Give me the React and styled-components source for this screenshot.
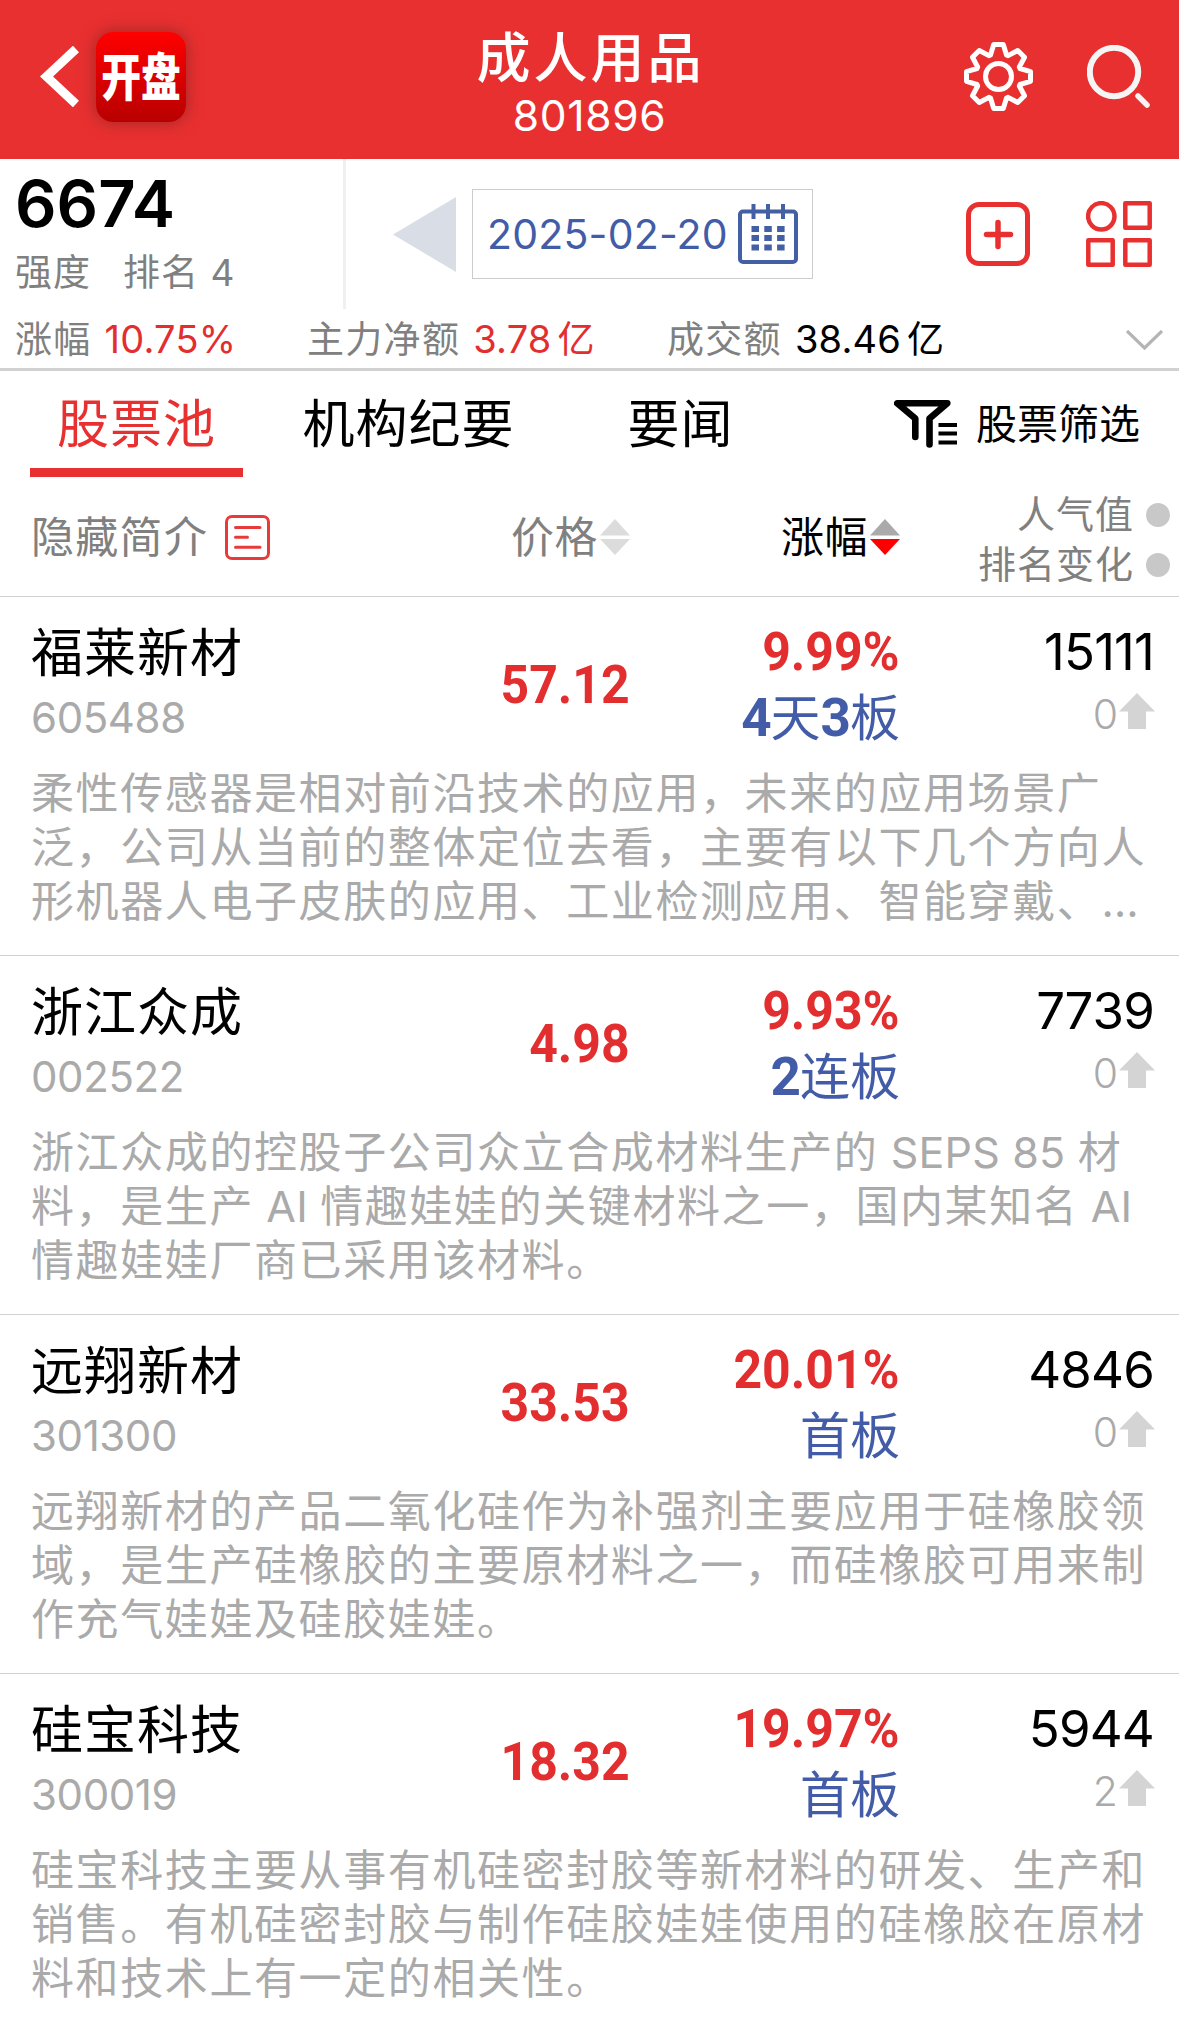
import React from "react";
import styled, { createGlobalStyle } from "styled-components";

const GlobalStyle = createGlobalStyle`
    * {
        box-sizing: border-box;
    }
    body {
        margin: 0;
        background-color: #fff;
        font-family: Inter, "Noto Sans CJK SC", sans-serif;
        overflow: hidden;
    }
    svg {
        display: block;
        flex-shrink: 0;
    }
`;

const Page = styled.div`
    width: 1179px;
    height: 2026px;
    overflow: hidden;
    background-color: #fff;
    color: #000;
    white-space: nowrap;
`;

const Header = styled.header`
    display: grid;
    grid-template-columns: 1fr auto 1fr;
    align-items: center;
    height: 159px;
    padding: 0 29px 6px 40px;
    background-color: #e93030;
    color: #fff;
`;

const HeaderLeft = styled.div`
    display: flex;
    align-items: center;
    gap: 17px;
`;

const AppLogo = styled.div`
    display: flex;
    align-items: center;
    justify-content: center;
    width: 90px;
    height: 90px;
    border-radius: 17px;
    background: linear-gradient(#ff0000, #b80000);
    box-shadow: 0 0 16px rgba(80, 30, 30, 0.5);
`;

const LogoText = styled.span`
    padding-top: 2px;
    font-size: 51px;
    line-height: 90px;
    font-weight: 900;
    transform: scaleX(0.78);
`;

const HeaderTitle = styled.div`
    margin-left: -9px;
    padding-top: 15px;
    text-align: center;
`;

const Title = styled.div`
    font-size: 54px;
    line-height: 64px;
    font-weight: 500;
    letter-spacing: 3px;
`;

const SubTitle = styled.div`
    font-size: 42.5px;
    line-height: 50px;
    letter-spacing: 0.7px;
    margin-left: -2px;
`;

const HeaderRight = styled.div`
    display: flex;
    align-items: center;
    justify-content: flex-end;
    gap: 54px;
`;

const Summary = styled.section`
    border-bottom: 3px solid #d1d1d1;
`;

const SummaryTop = styled.div`
    display: flex;
    align-items: center;
    height: 150px;
    padding-right: 27px;
`;

const Score = styled.div`
    width: 346px;
    height: 150px;
    padding: 8px 0 0 15px;
    border-right: 3px solid #f0f0f0;
`;

const ScoreValue = styled.div`
    font-size: 65px;
    line-height: 73px;
    font-weight: 600;
`;

const ScoreLabels = styled.div`
    display: flex;
    gap: 32px;
    color: #808080;
    font-size: 37px;
    line-height: 66px;
    letter-spacing: 1px;
`;

const DatePicker = styled.div`
    display: flex;
    align-items: center;
    gap: 16px;
    margin-left: 47px;
`;

const DateBox = styled.div`
    display: flex;
    align-items: center;
    justify-content: space-between;
    width: 341px;
    height: 90px;
    padding: 0 14px 0 14px;
    border: 1px solid #ccc;
    color: #435ca8;
    font-size: 41px;
    letter-spacing: 0.2px;
`;

const SummaryActions = styled.div`
    display: flex;
    align-items: center;
    gap: 56px;
    margin-left: auto;
`;

const Stats = styled.div`
    display: grid;
    grid-template-columns: 292px 360px 1fr auto;
    align-items: center;
    height: 59px;
    padding: 2px 16px 0 15px;
    font-size: 37px;
    line-height: 57px;
`;

const Stat = styled.div`
    display: flex;
    align-items: center;
`;

const StatLabel = styled.span`
    color: #808080;
    letter-spacing: 1.3px;
    margin-right: 13px;
`;

const StatValue = styled.span`
    color: ${props => props.$color || "#000"};
    font-size: 38px;
    letter-spacing: 0.2px;
`;

const StatUnit = styled.span`
    color: ${props => props.$color || "#000"};
    margin-left: 6px;
`;

const TabBar = styled.nav`
    display: flex;
    gap: 59px;
    height: 106px;
    padding: 0 39px 0 30px;
`;

const Tab = styled.div`
    width: 213px;
    padding-top: 10px;
    border-bottom: 9px solid ${props => (props.$active ? "#e93030" : "transparent")};
    color: ${props => (props.$active ? "#e93030" : "#000")};
    font-size: 52px;
    line-height: 87px;
    letter-spacing: 1px;
    text-align: center;
`;

const FilterButton = styled.div`
    display: flex;
    align-items: center;
    gap: 19px;
    margin-left: auto;
    font-size: 41px;
    line-height: 106px;
`;

const columns = "400px 199px 270px 1fr";

const TableHead = styled.div`
    display: grid;
    grid-template-columns: ${columns};
    align-items: center;
    height: 120px;
    padding: 1px 9px 0 31px;
    border-bottom: 1px solid #d1d1d1;
    color: #808080;
    font-size: 43px;
    line-height: 60px;
`;

const HeadIntro = styled.div`
    display: flex;
    align-items: center;
    gap: 17px;
    letter-spacing: 1.3px;
`;

const HeadSort = styled.div`
    display: flex;
    align-items: center;
    justify-content: flex-end;
    gap: 2px;
    color: ${props => (props.$active ? "#000" : "#808080")};
    letter-spacing: 0.5px;
`;

const HeadRank = styled.div`
    font-size: 38px;
    line-height: 50px;
    letter-spacing: 1px;
    padding-top: 3px;
`;

const RankOption = styled.div`
    display: flex;
    align-items: center;
    justify-content: flex-end;
    gap: 12px;
`;

const Dot = styled.span`
    width: 24px;
    height: 24px;
    margin-top: 2px;
    border-radius: 50%;
    background-color: #c8c8c8;
`;

const StockItem = styled.div`
    height: 359px;
    padding-top: 22px;
    border-bottom: 1px solid #d1d1d1;
`;

const StockMain = styled.div`
    display: grid;
    grid-template-columns: ${columns};
    align-items: center;
    height: 130px;
    padding: 0 25px 0 31px;
    line-height: 65px;
`;

const Cell = styled.div`
    display: flex;
    flex-direction: column;
    align-items: ${props => (props.$left ? "flex-start" : "flex-end")};
`;

const StockName = styled.div`
    padding-top: 2px;
    font-size: 52px;
    line-height: 65px;
    letter-spacing: 1px;
`;

const StockCode = styled.div`
    color: #aaa;
    font-size: 42px;
    line-height: 63px;
    letter-spacing: -0.4px;
`;

const Figure = styled.div`
    color: #e22e2e;
    font-family: Roboto, sans-serif;
    font-size: 54px;
    font-weight: 700;
    transform: scaleX(0.925);
    transform-origin: right;
`;

const Streak = styled.div`
    padding-top: 3px;
    color: #435ca8;
    font-size: 50px;
    line-height: 62px;
`;

const StreakNumber = styled.span`
    font-family: Roboto, sans-serif;
    font-size: 53px;
    font-weight: 700;
    letter-spacing: -1px;
`;

const Heat = styled.div`
    font-size: 51px;
    letter-spacing: -0.8px;
    font-kerning: none;
`;

const RankChange = styled.div`
    display: flex;
    align-items: center;
    gap: 1px;
    color: #aaa;
    font-size: 41px;
    line-height: 61px;
    font-weight: 300;
    margin: 0 -1px 4px 0;

    svg {
        margin-bottom: 7px;
    }
`;

const Description = styled.div`
    margin-top: 17px;
    padding-left: 31px;
    color: #aaa;
    font-size: 43px;
    letter-spacing: 1.6px;
`;

const Line = styled.div`
    display: flex;
    height: 54px;
    line-height: 54px;
    white-space: pre;
`;

const Latin = styled.span`
    letter-spacing: 0.2px;
`;

const BackIcon = () => (
    <svg width="39" height="61" viewBox="0 0 39 61" fill="none" stroke="#fff" strokeWidth="9">
        <path d="M36 3 L6.5 30.5 L36 58" />
    </svg>
);

const gearPath = () => {
    const tooth = [[-8, -21.5], [-4.8, -32], [4.8, -32], [8, -21.5]];
    const points = [];
    for (let i = 0; i < 8; i++) {
        const a = (i * Math.PI) / 4;
        tooth.forEach(([x, y]) => {
            const px = x * Math.cos(a) - y * Math.sin(a);
            const py = x * Math.sin(a) + y * Math.cos(a);
            points.push(`${px.toFixed(2)} ${py.toFixed(2)}`);
        });
    }
    return `M${points.join("L")}Z`;
};

const GearIcon = () => (
    <svg width="69" height="69" viewBox="-34.5 -34.5 69 69" fill="none" stroke="#fff" strokeWidth="5" strokeLinejoin="round">
        <path d={gearPath()} />
        <circle r="13" />
    </svg>
);

const SearchIcon = () => (
    <svg width="63" height="63" viewBox="0 0 63 63" fill="none" stroke="#f5f5f5" strokeLinecap="round">
        <circle cx="27" cy="27" r="24.2" strokeWidth="6" />
        <path d="M51 51 L60 60" strokeWidth="5.5" />
    </svg>
);

const PrevIcon = () => (
    <svg width="63" height="75" viewBox="0 0 63 75" fill="#d9dee6">
        <path d="M0 37.5 L63 0 V75 Z" />
    </svg>
);

const CalendarIcon = () => (
    <svg width="60" height="60" viewBox="0 0 60 60" fill="none" stroke="#4360a5">
        <rect x="2" y="7.5" width="56" height="50.5" rx="3" strokeWidth="4" />
        <path d="M15.5 0 V15 M30 0 V15 M45 0 V15" strokeWidth="4" />
        <path d="M13.5 25 H47 M13.5 34 H47 M13.5 43.5 H47" strokeWidth="6" strokeDasharray="7.5 5.3" />
    </svg>
);

const PlusIcon = () => (
    <svg width="64" height="64" viewBox="0 0 64 64" fill="none" stroke="#e93030" strokeLinecap="round">
        <rect x="2.5" y="2.5" width="59" height="59" rx="10.5" strokeWidth="5" />
        <path d="M20.5 32.5 H44.5 M32 20.5 V44.5" strokeWidth="5.5" />
    </svg>
);

const GridIcon = () => (
    <svg width="66" height="66" viewBox="0 0 66 66" fill="none" stroke="#e93030" strokeWidth="4.5" strokeLinejoin="round">
        <circle cx="15.3" cy="15.3" r="13.2" />
        <rect x="39.3" y="2.3" width="24.4" height="24.4" />
        <rect x="2.3" y="39.3" width="24.4" height="24.4" />
        <rect x="39.3" y="39.3" width="24.4" height="24.4" />
    </svg>
);

const ExpandIcon = () => (
    <svg width="37" height="20" viewBox="0 0 37 20" fill="none" stroke="#b4b4b4" strokeWidth="3.2">
        <path d="M1 1 L18.5 18 L36 1" />
    </svg>
);

const FilterIcon = () => (
    <svg width="63" height="48" viewBox="0 0 63 48" fill="none" stroke="#000">
        <path d="M21.3 37 V18.5 L3.2 3.3 H53.3 L35.5 18.5 V44.5" strokeWidth="6.6" strokeLinejoin="round" strokeLinecap="round" />
        <path d="M44.5 25 H63 M44.5 33.5 H63 M44.5 42.5 H63" strokeWidth="4.2" />
    </svg>
);

const IntroIcon = () => (
    <svg width="45" height="45" viewBox="0 0 45 45" fill="none" stroke="#e93a3a" strokeLinecap="round">
        <rect x="1.5" y="1.5" width="42" height="42" rx="5.5" strokeWidth="3" />
        <path d="M10.5 12.5 H35 M10.5 22.3 H22.5 M10.5 32.3 H35" strokeWidth="3" />
    </svg>
);

const SortIcon = ({ up, down }) => (
    <svg width="30" height="36" viewBox="0 0 30 36">
        <path d="M15 0 L30 16.5 H0 Z" fill={up} />
        <path d="M0 20 H30 L15 36 Z" fill={down} />
    </svg>
);

const ArrowUpIcon = () => (
    <svg width="36" height="36" viewBox="0 0 36 36" fill="#d4d4d4">
        <path d="M18 0 L36 18.5 H27 V36 H9 V18.5 H0 Z" />
    </svg>
);

const stats = [
    { label: "涨幅", value: "10.75%", color: "#e22e2e" },
    { label: "主力净额", value: "3.78", unit: "亿", color: "#e22e2e" },
    { label: "成交额", value: "38.46", unit: "亿" }
];

const tabs = ["股票池", "机构纪要", "要闻"];

const stocks = [
    {
        name: "福莱新材",
        code: "605488",
        price: "57.12",
        change: "9.99%",
        streak: "4天3板",
        heat: "15111",
        rank: "0",
        description: [
            "柔性传感器是相对前沿技术的应用，未来的应用场景广",
            "泛，公司从当前的整体定位去看，主要有以下几个方向人",
            "形机器人电子皮肤的应用、工业检测应用、智能穿戴、…"
        ]
    },
    {
        name: "浙江众成",
        code: "002522",
        price: "4.98",
        change: "9.93%",
        streak: "2连板",
        heat: "7739",
        rank: "0",
        description: [
            "浙江众成的控股子公司众立合成材料生产的 SEPS 85 材",
            "料，是生产 AI 情趣娃娃的关键材料之一，国内某知名 AI",
            "情趣娃娃厂商已采用该材料。"
        ]
    },
    {
        name: "远翔新材",
        code: "301300",
        price: "33.53",
        change: "20.01%",
        streak: "首板",
        heat: "4846",
        rank: "0",
        description: [
            "远翔新材的产品二氧化硅作为补强剂主要应用于硅橡胶领",
            "域，是生产硅橡胶的主要原材料之一，而硅橡胶可用来制",
            "作充气娃娃及硅胶娃娃。"
        ]
    },
    {
        name: "硅宝科技",
        code: "300019",
        price: "18.32",
        change: "19.97%",
        streak: "首板",
        heat: "5944",
        rank: "2",
        description: [
            "硅宝科技主要从事有机硅密封胶等新材料的研发、生产和",
            "销售。有机硅密封胶与制作硅胶娃娃使用的硅橡胶在原材",
            "料和技术上有一定的相关性。"
        ]
    }
];

const Stock = ({ stock }) => (
    <StockItem>
        <StockMain>
            <Cell $left>
                <StockName>{stock.name}</StockName>
                <StockCode>{stock.code}</StockCode>
            </Cell>
            <Cell>
                <Figure>{stock.price}</Figure>
            </Cell>
            <Cell>
                <Figure>{stock.change}</Figure>
                <Streak>
                    {stock.streak.split(/(\d)/).map((part, i) =>
                        /\d/.test(part) ? <StreakNumber key={i}>{part}</StreakNumber> : part
                    )}
                </Streak>
            </Cell>
            <Cell>
                <Heat>{stock.heat}</Heat>
                <RankChange>
                    {stock.rank}
                    <ArrowUpIcon />
                </RankChange>
            </Cell>
        </StockMain>
        <Description>
            {stock.description.map(line => (
                <Line key={line}>
                    {line.split(/([A-Z0-9 ]+)/).map((part, i) =>
                        /[A-Z]/.test(part) ? <Latin key={i}>{part}</Latin> : <span key={i}>{part}</span>
                    )}
                </Line>
            ))}
        </Description>
    </StockItem>
);

const App = () => {
    return (
        <Page>
            <GlobalStyle />
            <Header>
                <HeaderLeft>
                    <BackIcon />
                    <AppLogo>
                        <LogoText>开盘</LogoText>
                    </AppLogo>
                </HeaderLeft>
                <HeaderTitle>
                    <Title>成人用品</Title>
                    <SubTitle>801896</SubTitle>
                </HeaderTitle>
                <HeaderRight>
                    <GearIcon />
                    <SearchIcon />
                </HeaderRight>
            </Header>
            <Summary>
                <SummaryTop>
                    <Score>
                        <ScoreValue>6674</ScoreValue>
                        <ScoreLabels>
                            <span>强度</span>
                            <span>排名 4</span>
                        </ScoreLabels>
                    </Score>
                    <DatePicker>
                        <PrevIcon />
                        <DateBox>
                            2025-02-20
                            <CalendarIcon />
                        </DateBox>
                    </DatePicker>
                    <SummaryActions>
                        <PlusIcon />
                        <GridIcon />
                    </SummaryActions>
                </SummaryTop>
                <Stats>
                    {stats.map(stat => (
                        <Stat key={stat.label}>
                            <StatLabel>{stat.label}</StatLabel>
                            <StatValue $color={stat.color}>{stat.value}</StatValue>
                            {stat.unit && <StatUnit $color={stat.color}>{stat.unit}</StatUnit>}
                        </Stat>
                    ))}
                    <ExpandIcon />
                </Stats>
            </Summary>
            <TabBar>
                {tabs.map((tab, i) => (
                    <Tab key={tab} $active={i === 0}>
                        {tab}
                    </Tab>
                ))}
                <FilterButton>
                    <FilterIcon />
                    股票筛选
                </FilterButton>
            </TabBar>
            <TableHead>
                <HeadIntro>
                    隐藏简介
                    <IntroIcon />
                </HeadIntro>
                <HeadSort>
                    价格
                    <SortIcon up="#dcdcdc" down="#dcdcdc" />
                </HeadSort>
                <HeadSort $active>
                    涨幅
                    <SortIcon up="#aaa" down="#f00" />
                </HeadSort>
                <HeadRank>
                    <RankOption>
                        人气值
                        <Dot />
                    </RankOption>
                    <RankOption>
                        排名变化
                        <Dot />
                    </RankOption>
                </HeadRank>
            </TableHead>
            {stocks.map(stock => (
                <Stock key={stock.code} stock={stock} />
            ))}
        </Page>
    );
};

export default App;
